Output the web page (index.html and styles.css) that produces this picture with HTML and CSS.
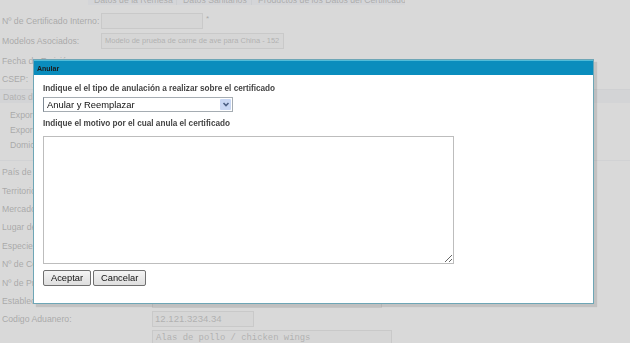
FILE: index.html
```html
<!DOCTYPE html>
<html lang="es">
<head>
    <meta charset="UTF-8">
    <title>Certificado - Anular</title>
    <link rel="stylesheet" href="styles.css">
</head>
<body>

    <div class="page">
        <div class="tabs">
            <span class="tab">Datos de la Remesa</span>
            <span class="tab">Datos Sanitarios</span>
            <span class="tab">Productos de los Datos del Certificado</span>
        </div>

        <div class="form">
            <div class="row">
                <label class="lbl">Nº de Certificado Interno:</label>
                <span class="field w-cert"></span>
                <span class="req">*</span>
            </div>
            <div class="row">
                <label class="lbl">Modelos Asociados:</label>
                <span class="field w-model">Modelo de prueba de carne de ave para China - 152</span>
            </div>
            <div class="row">
                <label class="lbl">Fecha de Emisión:</label>
            </div>
            <div class="row row-short">
                <label class="lbl">CSEP:</label>
            </div>

            <div class="section-bar">Datos del Exportador</div>

            <div class="sub">
                <div class="sub-row">Exportador:</div>
                <div class="sub-row">Exportador CIF:</div>
                <div class="sub-row">Domicilio:</div>
            </div>

            <div class="details">
                <div class="row2"><label class="lbl2">País de Origen:</label></div>
                <div class="row2"><label class="lbl2">Territorio:</label></div>
                <div class="row2"><label class="lbl2">Mercado de Destino:</label></div>
                <div class="row2"><label class="lbl2">Lugar de Carga:</label></div>
                <div class="row2"><label class="lbl2">Especie:</label></div>
                <div class="row2"><label class="lbl2">Nº de Contenedor:</label></div>
                <div class="row2"><label class="lbl2">Nº de Precinto:</label></div>
                <div class="row2">
                    <label class="lbl2">Establecimiento:</label>
                    <span class="field w-estab"></span>
                </div>
                <div class="row2">
                    <label class="lbl2">Codigo Aduanero:</label>
                    <span class="field w-code">12.121.3234.34</span>
                </div>
                <div class="row2">
                    <label class="lbl2"></label>
                    <span class="field w-desc mono">Alas de pollo / chicken wings</span>
                </div>
            </div>
        </div>
    </div>

    <div class="overlay"></div>

    <div class="dialog">
        <div class="dialog-title">Anular</div>
        <div class="dialog-body">
            <p class="dlg-label first">Indique el el tipo de anulación a realizar sobre el certificado</p>
            <div class="select-box">
                <span>Anular y Reemplazar</span>
                <span class="select-arrow">
                    <svg width="10" height="11" viewBox="0 0 10 11">
                        <path d="M2.5 4 L5 6.5 L7.5 4" fill="none" stroke="#4d6185" stroke-width="1.6"/>
                    </svg>
                </span>
            </div>
            <p class="dlg-label">Indique el motivo por el cual anula el certificado</p>
            <textarea class="reason"></textarea>
            <div class="buttons">
                <button class="btn">Aceptar</button>
                <button class="btn">Cancelar</button>
            </div>
        </div>
    </div>

</body>
</html>
```

FILE: styles.css
```css
body {
    margin: 0;
    background-color: #ffffff;
    font-family: 'Liberation Sans', Arial, sans-serif;
    overflow: hidden;
}

.page {
    font-size: 8.7px;
    color: #333;
}

/* pestañas de arriba, casi fuera de la vista */
.tabs {
    display: flex;
    margin: -8px 0 0 88px;
    width: 317px;
    height: 13px;
    background-color: #e9eef8;
}

.tab {
    padding: 3px 8px 0 6px;
    border-right: 1px solid #c9d0dc;
    color: #444;
    white-space: nowrap;
    overflow: hidden;
}

.tab:last-child {
    flex-grow: 1;
    border-right: none;
}

.form {
    padding-top: 6px;
}

.row {
    display: flex;
    align-items: center;
    height: 20px;
    padding-left: 2px;
}

.row-short {
    height: 15px;
}

.lbl {
    width: 99px;
    flex-shrink: 0;
}

.field {
    box-sizing: border-box;
    display: block;
    height: 16px;
    line-height: 14px;
    padding: 0 3px;
    border: 1px solid #bbb;
    background-color: #f2f2f2;
    font-size: 7.5px;
    color: #555;
    white-space: nowrap;
}

.w-cert { width: 102px; }
.w-model { width: 183px; }
.w-estab { width: 230px; height: 14px; }
.w-code { width: 102px; font-size: 9.6px; padding-left: 2px; }
.w-desc { width: 240px; }

.mono {
    font-family: 'Liberation Mono', 'Courier New', monospace;
    font-size: 8.9px;
}

.req {
    margin-left: 3px;
    margin-top: -6px;
    font-size: 8px;
}

.section-bar {
    margin-top: 3px;
    height: 14px;
    line-height: 14px;
    padding-left: 3px;
    background-color: #e4e9f1;
    border-top: 1px solid #d3d9e2;
    box-sizing: border-box;
    color: #555;
}

.sub {
    padding: 5px 0 7px 10px;
    border-bottom: 1px solid #dde2ea;
}

.sub-row {
    height: 15px;
    line-height: 15px;
}

.details {
    padding-top: 2px;
}

.row2 {
    display: flex;
    align-items: center;
    height: 18.4px;
    padding-left: 2px;
}

.lbl2 {
    width: 150px;
    flex-shrink: 0;
}

.overlay {
    position: fixed;
    inset: 0;
    background-color: rgba(205, 205, 205, 0.76);
}

/* ventana modal */
.dialog {
    position: absolute;
    left: 33px;
    top: 59px;
    width: 561px;
    height: 245px;
    box-sizing: border-box;
    background-color: #fff;
    border: 1px solid #6ea6b6;
    box-shadow: 3px 3px 1px rgba(0, 0, 0, 0.1);
}

.dialog-title {
    height: 15px;
    line-height: 15px;
    padding-left: 3px;
    background-color: #0a8dbd;
    border-top: 1px solid #52bcd8;
    box-sizing: border-box;
    font-size: 7px;
    font-weight: bold;
    color: #1c1c1c;
}

.dialog-body {
    padding: 0 9px;
}

.dlg-label {
    margin: 7px 0 0;
    height: 10px;
    line-height: 10px;
    font-size: 8.2px;
    font-weight: bold;
    color: #444;
}

.dlg-label.first {
    margin-top: 9px;
}

.select-box {
    box-sizing: border-box;
    display: flex;
    align-items: center;
    justify-content: space-between;
    width: 190px;
    height: 15px;
    margin-top: 3px;
    padding-left: 3px;
    border: 1px solid #a5acb2;
    border-left-color: #7f8a94;
    font-size: 9.4px;
    color: #111;
}

.select-arrow {
    display: flex;
    align-items: center;
    justify-content: center;
    width: 11px;
    height: 11px;
    margin-right: 1px;
    background-color: #c8d7f4;
    border-radius: 1px;
}

.reason {
    display: block;
    box-sizing: border-box;
    width: 411px;
    height: 128px;
    margin-top: 7px;
    border: 1px solid #bdbdbd;
    font-family: inherit;
    outline: none;
}

.buttons {
    display: flex;
    gap: 2px;
    margin-top: 6px;
}

.btn {
    box-sizing: border-box;
    height: 16px;
    padding: 0 7px;
    border: 1px solid #707070;
    border-radius: 2px;
    background: linear-gradient(#f4f4f4, #dedede);
    font-family: 'Liberation Sans', Arial, sans-serif;
    font-size: 9.3px;
    color: #111;
}
```
